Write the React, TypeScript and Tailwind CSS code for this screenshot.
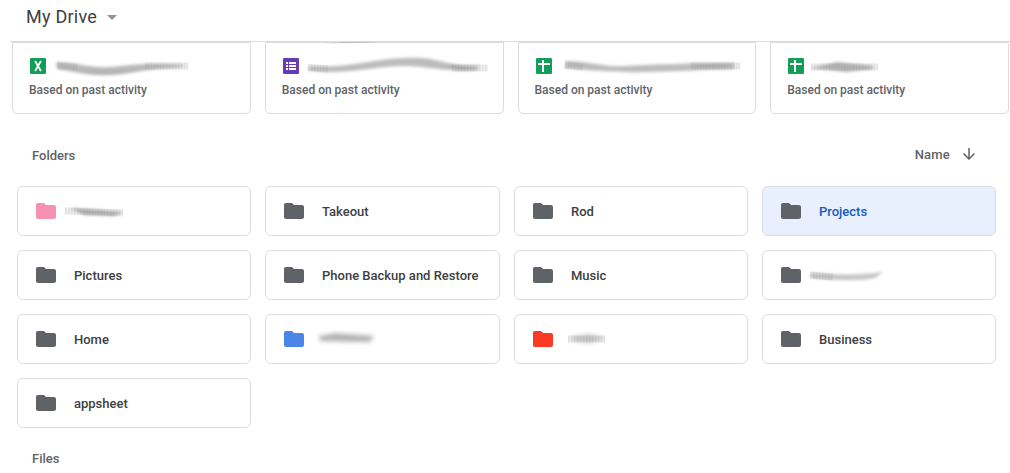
import React from "react";

type Smudge = { d: string; o: number; blur: number; stripe?: string };

function Scribble({ smudges, className }: { smudges: Smudge[]; className: string }) {
  return (
    <svg className={`pointer-events-none absolute overflow-visible ${className}`} fill="none" aria-hidden="true">
      {smudges.map((s, i) => (
        <g key={i}>
          <path d={s.d} fill="#858786" opacity={s.o} style={{ filter: `blur(${s.blur}px)` }} />
          {s.stripe && (
            <g style={{ filter: "blur(0.6px)" }}>
              <path d={s.stripe} stroke="#999" strokeWidth={7} opacity={0.16} />
              <path d={s.stripe} stroke="#999" strokeWidth={7} opacity={0.16} strokeDasharray="1.5 1.5" />
            </g>
          )}
        </g>
      ))}
    </svg>
  );
}

function ExcelIcon() {
  return (
    <svg width="16" height="16" viewBox="0 0 16 16">
      <rect width="16" height="16" rx="1.3" fill="#129d58" />
      <path d="M5.1 3 10.9 13M10.9 3 5.1 13" stroke="#fff" strokeWidth="1.8" />
    </svg>
  );
}

function FormsIcon() {
  return (
    <svg width="16" height="16" viewBox="0 0 16 16">
      <rect width="16" height="16" rx="1.3" fill="#673ab7" />
      <path d="M3 4h2v2H3zM6 4h7v2H6zM3 7h2v2H3zM6 7h7v2H6zM3 10h2v2H3zM6 10h7v2H6z" fill="#fff" />
    </svg>
  );
}

function SheetsIcon() {
  return (
    <svg width="16" height="16" viewBox="0 0 16 16">
      <rect width="16" height="16" rx="1.3" fill="#129d58" />
      <path d="M2 5h4V2h2v3h6v2H8v7H6V7H2z" fill="#fff" />
    </svg>
  );
}

function FolderIcon({ className }: { className: string }) {
  return (
    <svg width="24" height="24" viewBox="0 0 24 24" className={`shrink-0 ${className}`} fill="currentColor">
      <path d="M10 4H4c-1.1 0-1.99.9-1.99 2L2 18c0 1.1.9 2 2 2h16c1.1 0 2-.9 2-2V8c0-1.1-.9-2-2-2h-8l-2-2z" />
    </svg>
  );
}

const recent: { icon: () => React.ReactElement; smudges: Smudge[] }[] = [
  {
    icon: ExcelIcon,
    smudges: [
      { d: "M43 20C65 21 78 26 96 25S125 20 170 23L170 25C130 27 116 32 96 33S62 30 44 27Z", o: 0.58, blur: 1.7, stripe: "M45 23.5L64 25" },
      { d: "M70 29Q98 36 130 28L98 31Z", o: 0.3, blur: 1.8, stripe: "M132 24H175" },
    ],
  },
  {
    icon: FormsIcon,
    smudges: [
      { d: "M44 24C76 27 102 18 137 16S172 22 210 25V28C174 30 164 24 137 24S76 34 42 28Z", o: 0.55, blur: 1.8, stripe: "M42 25.5L62 27" },
      { d: "M180 23H213V28H190Z", o: 0.3, blur: 1.4, stripe: "M186 26H222" },
      { d: "M56 1.5Q85 -1 115 0Q85 1 56 1.5Z", o: 0.4, blur: 0.7 },
    ],
  },
  {
    icon: SheetsIcon,
    smudges: [
      { d: "M47 19C75 20 82 25 106 24S160 21 215 21V27C170 28 130 31 106 30S75 29 46 26Z", o: 0.55, blur: 1.6, stripe: "M46 23L64 25" },
      { d: "M170 22H208V26H180Z", o: 0.2, blur: 1.4, stripe: "M172 24H221" },
    ],
  },
  {
    icon: SheetsIcon,
    smudges: [{ d: "M40 26L66 20L102 24V27L75 30Z", o: 0.62, blur: 1.8, stripe: "M40 25H107" }],
  },
];

type Folder = { name?: string; color?: string; selected?: boolean; smudges?: Smudge[] };

const folders: Folder[] = [
  { color: "text-[#f691b2]", smudges: [{ d: "M52 21L70 22L105 25L96 29L66 28Z", o: 0.65, blur: 1.6, stripe: "M47 24L105 26" }] },
  { name: "Takeout" },
  { name: "Rod" },
  { name: "Projects", selected: true },
  { name: "Pictures" },
  { name: "Phone Backup and Restore" },
  { name: "Music" },
  { smudges: [{ d: "M48 22C75 24 98 24 120 21L112 27C100 30 75 30 48 27Z", o: 0.46, blur: 1.5, stripe: "M47 24L70 26" }] },
  { name: "Home" },
  { color: "text-[#4986e7]", smudges: [{ d: "M53 21L70 18L108 21L104 27L87 27L54 26Z", o: 0.62, blur: 1.9 }] },
  { color: "text-[#fa3a22]", smudges: [{ d: "M56 22L74 19L90 23L75 28L58 26Z", o: 0.45, blur: 1.9, stripe: "M53 24H90" }] },
  { name: "Business" },
  { name: "appsheet" },
];

export default function App() {
  return (
    <div className="h-[473px] w-[1010px] overflow-hidden bg-white font-['Roboto','Liberation_Sans',sans-serif] text-[#5f6368]">
      <header className="ml-[10px] flex h-[42px] items-start border-b border-[#dadce0] pl-4 pt-[5px]">
        <h1 className="w-[72px] whitespace-nowrap text-[18px] font-normal leading-6 tracking-[0.25px] text-[#3c4043]">My Drive</h1>
        <svg width="10" height="5" viewBox="0 0 10 5" className="ml-[9px] mt-[10px]">
          <path d="M0 0h10L5 5z" fill="#919396" />
        </svg>
      </header>

      <section className="ml-3 grid w-[997px] grid-cols-4 gap-x-[14px]">
        {recent.map(({ icon: Icon, smudges }, i) => (
          <article key={i} className="relative h-[72px] rounded-b-[5px] border border-[#dadce0] pl-4 pt-[15px]">
            <div className="pl-px">
              <Icon />
            </div>
            <p className="mt-2 text-[12px] font-medium leading-4">Based on past activity</p>
            {i === 0 && <span className="absolute left-[54px] top-[38px] h-[5px] w-[38px] bg-white/80 blur-[1px]" />}
            <Scribble className="left-0 top-[-1px] h-[70px] w-[236px]" smudges={smudges} />
          </article>
        ))}
      </section>

      <div className="flex h-[72px] items-center justify-between pl-8 pr-[33px] pt-3 text-[13px] font-medium">
        <h2>Folders</h2>
        <button className="-mt-0.5 flex items-center gap-[11px]">
          <span className="tracking-[0.2px]">Name</span>
          <svg width="16" height="16" viewBox="4 4 16 16" fill="currentColor" className="-mt-0.5">
            <path d="M20 12l-1.41-1.41L13 16.17V4h-2v12.17l-5.58-5.59L4 12l8 8 8-8z" transform="translate(3 3) scale(.75)" />
          </svg>
        </button>
      </div>

      <section className="ml-[17px] grid w-[979px] grid-cols-[234px_235px_234px_234px] gap-[14px]">
        {folders.map((f, i) => (
          <div
            key={i}
            className={`relative flex h-[50px] items-center rounded-[6px] border border-[#dadce0] pl-4 text-[13px] font-medium ${
              f.selected ? "bg-[#e8f0fe] text-[#185abc]" : "text-[#3c4043]"
            }`}
          >
            <FolderIcon className={f.color ?? "text-[#5f6368]"} />
            {f.name && <span className="ml-4 whitespace-nowrap pt-0.5">{f.name}</span>}
            {f.smudges && <Scribble className="left-0 top-0 h-[48px] w-[232px]" smudges={f.smudges} />}
          </div>
        ))}
      </section>

      <h2 className="ml-8 mt-[21px] text-[13px] font-medium leading-5">Files</h2>
    </div>
  );
}
